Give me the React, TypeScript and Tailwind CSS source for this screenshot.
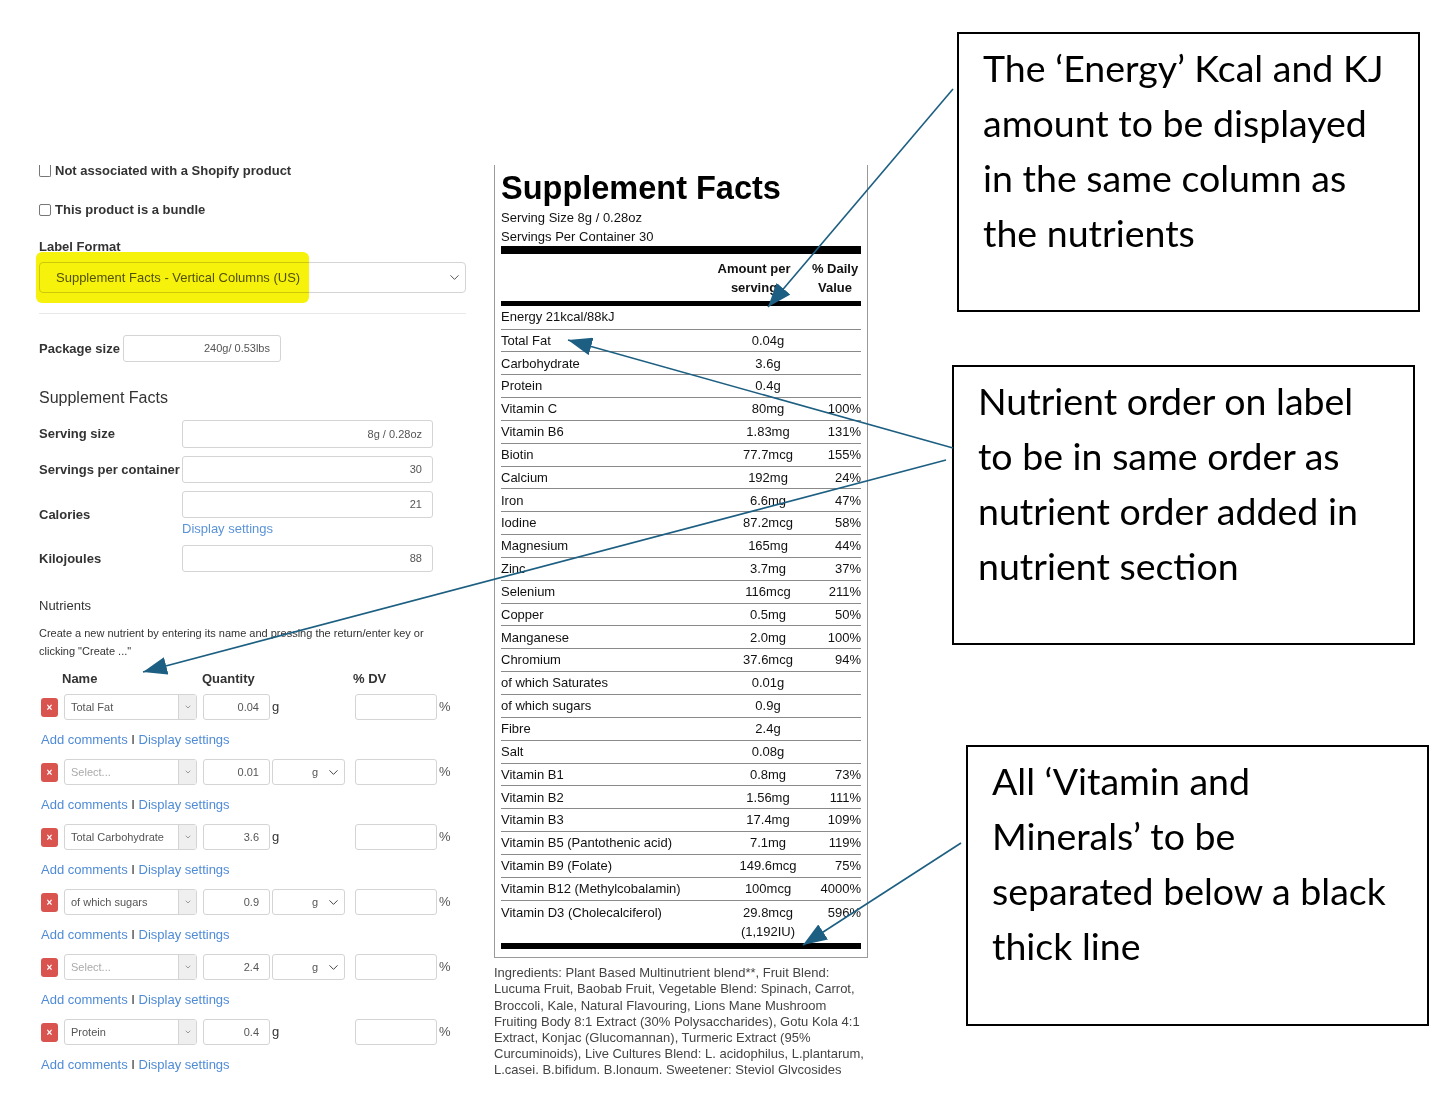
import React from 'react';
import { ChevronDown } from 'lucide-react';

type NutrientRow = { name: string | null; qty: string; unit: string | null };

const nutrientRows: NutrientRow[] = [
  { name: 'Total Fat', qty: '0.04', unit: null },
  { name: null, qty: '0.01', unit: 'g' },
  { name: 'Total Carbohydrate', qty: '3.6', unit: null },
  { name: 'of which sugars', qty: '0.9', unit: 'g' },
  { name: null, qty: '2.4', unit: 'g' },
  { name: 'Protein', qty: '0.4', unit: null },
];

const labelRows: [string, string, string][] = [
  ['Total Fat', '0.04g', ''],
  ['Carbohydrate', '3.6g', ''],
  ['Protein', '0.4g', ''],
  ['Vitamin C', '80mg', '100%'],
  ['Vitamin B6', '1.83mg', '131%'],
  ['Biotin', '77.7mcg', '155%'],
  ['Calcium', '192mg', '24%'],
  ['Iron', '6.6mg', '47%'],
  ['Iodine', '87.2mcg', '58%'],
  ['Magnesium', '165mg', '44%'],
  ['Zinc', '3.7mg', '37%'],
  ['Selenium', '116mcg', '211%'],
  ['Copper', '0.5mg', '50%'],
  ['Manganese', '2.0mg', '100%'],
  ['Chromium', '37.6mcg', '94%'],
  ['of which Saturates', '0.01g', ''],
  ['of which sugars', '0.9g', ''],
  ['Fibre', '2.4g', ''],
  ['Salt', '0.08g', ''],
  ['Vitamin B1', '0.8mg', '73%'],
  ['Vitamin B2', '1.56mg', '111%'],
  ['Vitamin B3', '17.4mg', '109%'],
  ['Vitamin B5 (Pantothenic acid)', '7.1mg', '119%'],
  ['Vitamin B9 (Folate)', '149.6mcg', '75%'],
  ['Vitamin B12 (Methylcobalamin)', '100mcg', '4000%'],
];

const ingredients = [
  'Ingredients: Plant Based Multinutrient blend**, Fruit Blend:',
  'Lucuma Fruit, Baobab Fruit, Vegetable Blend: Spinach, Carrot,',
  'Broccoli, Kale, Natural Flavouring, Lions Mane Mushroom',
  'Fruiting Body 8:1 Extract (30% Polysaccharides), Gotu Kola 4:1',
  'Extract, Konjac (Glucomannan), Turmeric Extract (95%',
  'Curcuminoids), Live Cultures Blend: L. acidophilus, L.plantarum,',
  'L.casei, B.bifidum, B.longum, Sweetener: Steviol Glycosides',
];

function Field({ value, className }: { value: string; className: string }) {
  return (
    <div className={`flex items-center justify-end rounded-[3px] border border-[#d4d4d4] pr-[10px] text-[11px] text-[#555] ${className}`}>
      {value}
    </div>
  );
}

function FormRow({ label, children, height }: { label: string; children: React.ReactNode; height: string }) {
  return (
    <div className={`flex items-center ${height}`}>
      <div className="w-[143px] font-bold">{label}</div>
      {children}
    </div>
  );
}

function Links() {
  return (
    <div className="mt-[12px] ml-[2px] h-[16px] leading-[16px] text-[13px]">
      <span className="text-[#4f8bd6]">Add comments</span>
      <span className="text-[#333]"> I </span>
      <span className="text-[#4f8bd6]">Display settings</span>
    </div>
  );
}

function NutrientEditor({ row, first }: { row: NutrientRow; first: boolean }) {
  return (
    <div className={first ? 'mt-[7px]' : 'mt-[11px]'}>
      <div className="flex h-[26px] items-center">
        <div className="ml-[2px] flex h-[19px] w-[17px] items-center justify-center rounded-[3px] bg-[#d9534f] text-[10px] font-bold text-white">
          ×
        </div>
        <div className="ml-[6px] flex h-[26px] w-[133px] rounded-[3px] border border-[#d4d4d4]">
          <div className={`flex flex-1 items-center pl-[6px] text-[11px] ${row.name ? 'text-[#555]' : 'text-[#aaa]'}`}>
            {row.name ?? 'Select...'}
          </div>
          <div className="flex w-[18px] items-center justify-center border-l border-[#d4d4d4] bg-[#efefef]">
            <ChevronDown size={8} strokeWidth={2.5} className="text-[#888]" />
          </div>
        </div>
        <Field value={row.qty} className="ml-[6px] h-[26px] w-[67px] text-[11px]" />
        <div className="flex w-[85px] items-center">
          {row.unit ? (
            <div className="ml-[2px] flex h-[26px] w-[73px] items-center justify-end gap-[8px] rounded-[3px] border border-[#d4d4d4] pr-[3px] text-[11px] text-[#555]">
              {row.unit}
              <ChevronDown size={15} strokeWidth={1.6} className="text-[#444]" />
            </div>
          ) : (
            <span className="ml-[2px] text-[13px] text-[#333]">g</span>
          )}
        </div>
        <div className="h-[26px] w-[82px] rounded-[3px] border border-[#d4d4d4]" />
        <span className="ml-[2px] text-[13px] text-[#555]">%</span>
      </div>
      <Links />
    </div>
  );
}

function FormColumn() {
  return (
    <div className="ml-[39px] w-[427px] shrink-0 pt-[163px] text-[13px] text-[#333]">
      <div className="flex h-[16px] items-center gap-[4px] font-bold">
        <span className="h-[12px] w-[12px] rounded-b-[2px] border border-t-0 border-[#777]" />
        Not associated with a Shopify product
      </div>
      <div className="mt-[23px] flex h-[16px] items-center gap-[4px] font-bold">
        <span className="h-[12px] w-[12px] rounded-[2px] border border-[#777]" />
        This product is a bundle
      </div>
      <div className="mt-[21px] h-[16px] font-bold leading-[16px]">Label Format</div>
      <div className="relative mt-[7px]">
        <div className="flex h-[31px] items-center justify-between rounded-[4px] border border-[#d4d4d4] pl-[16px] pr-[3px]">
          <span className="text-[13px] text-[#555]">Supplement Facts - Vertical Columns (US)</span>
          <ChevronDown size={15} strokeWidth={1.6} className="text-[#555]" />
        </div>
        <div className="absolute left-[-3px] top-[-10px] h-[51px] w-[273px] rounded-[6px] bg-[#f6f20c] mix-blend-multiply" />
      </div>
      <div className="mt-[20px] border-t border-[#e8e8e8]" />

      <div className="mt-[21px] flex h-[27px] items-center">
        <div className="w-[84px] font-bold">Package size</div>
        <Field value="240g/ 0.53lbs" className="h-[27px] w-[158px]" />
      </div>

      <div className="mt-[26px] h-[20px] text-[16px] leading-[20px] text-[#333]">Supplement Facts</div>

      <div className="mt-[12px]">
        <FormRow label="Serving size" height="h-[28px]">
          <Field value="8g / 0.28oz" className="h-[28px] w-[251px]" />
        </FormRow>
      </div>
      <div className="mt-[8px]">
        <FormRow label="Servings per container" height="h-[27px]">
          <Field value="30" className="h-[27px] w-[251px]" />
        </FormRow>
      </div>
      <div className="mt-[8px] flex items-center">
        <div className="w-[143px] font-bold">Calories</div>
        <div>
          <Field value="21" className="h-[27px] w-[251px]" />
          <div className="mt-[2px] h-[18px] leading-[18px] text-[#5b93d8]">Display settings</div>
        </div>
      </div>
      <div className="mt-[7px]">
        <FormRow label="Kilojoules" height="h-[27px]">
          <Field value="88" className="h-[27px] w-[251px]" />
        </FormRow>
      </div>

      <div className="mt-[26px] h-[16px] leading-[16px]">Nutrients</div>
      <div className="mt-[10px] text-[11px] leading-[18px]">
        Create a new nutrient by entering its name and pressing the return/enter key or
        <br />
        clicking "Create ..."
      </div>
      <div className="mt-[11px] flex h-[16px] font-bold leading-[16px]">
        <span className="ml-[23px] w-[140px]">Name</span>
        <span className="w-[151px]">Quantity</span>
        <span>% DV</span>
      </div>
      {nutrientRows.map((row, i) => (
        <NutrientEditor key={i} row={row} first={i === 0} />
      ))}
    </div>
  );
}

function LabelColumn() {
  return (
    <div className="ml-[28px] w-[374px] shrink-0 pt-[165px]">
      <div className="border-x border-b border-[#9a9a9a] px-[6px] pb-[8px] text-[13px] text-[#111]">
        <div className="pt-[7px] text-[32.5px] font-bold leading-none text-black">Supplement Facts</div>
        <div className="mt-[3px] leading-[19px]">
          <div>Serving Size 8g / 0.28oz</div>
          <div>Servings Per Container 30</div>
        </div>
        <div className="h-[8px] bg-black" />
        <div className="mt-[5px] flex font-bold leading-[19px]">
          <div className="w-[204px]" />
          <div className="w-[98px] text-center">
            Amount per
            <br />
            serving
          </div>
          <div className="ml-[6px] w-[52px] text-center">
            % Daily
            <br />
            Value
          </div>
        </div>
        <div className="mt-[4px] h-[5px] bg-black" />
        <div className="flex h-[23px] items-center">Energy 21kcal/88kJ</div>
        {labelRows.map(([name, amt, dv]) => (
          <div key={name} className="flex h-[22.85px] items-center border-t border-[#8a8a8a]">
            <div className="flex-1">{name}</div>
            <div className="w-[70px] text-center">{amt}</div>
            <div className="w-[58px] text-right">{dv}</div>
          </div>
        ))}
        <div className="flex border-t border-[#8a8a8a] pt-[2.5px] leading-[19px]">
          <div className="flex-1">Vitamin D3 (Cholecalciferol)</div>
          <div className="w-[70px] text-center">
            29.8mcg
            <br />
            (1,192IU)
          </div>
          <div className="w-[58px] text-right">596%</div>
        </div>
        <div className="mt-[1.5px] h-[6.5px] bg-black" />
      </div>
      <div className="mt-[7px] h-[109px] overflow-hidden whitespace-nowrap text-[13px] leading-[16.2px] text-[#444]">
        {ingredients.map((line) => (
          <div key={line}>{line}</div>
        ))}
      </div>
    </div>
  );
}

function Note({ lines, className }: { lines: string[]; className: string }) {
  return (
    <div className={`h-[280px] w-[463px] whitespace-nowrap border-2 border-black pl-[24px] pt-[6px] ${className}`}>
      {lines.map((l) => (
        <div key={l}>{l}</div>
      ))}
    </div>
  );
}

function NotesColumn() {
  return (
    <div className="ml-[84px] shrink-0 font-['Lato',sans-serif] text-[37.5px] leading-[55px] text-black">
      <Note
        className="ml-[5px] mt-[32px]"
        lines={['The \u2018Energy\u2019 Kcal and KJ', 'amount to be displayed', 'in the same column as', 'the nutrients']}
      />
      <Note
        className="mt-[53px]"
        lines={['Nutrient order on label', 'to be in same order as', 'nutrient order added in', 'nutrient section']}
      />
      <Note
        className="ml-[14px] mt-[100px] h-[281px]"
        lines={['All \u2018Vitamin and', 'Minerals\u2019 to be', 'separated below a black', 'thick line']}
      />
    </div>
  );
}

function Arrows() {
  const c = '#1d5f82';
  return (
    <svg className="pointer-events-none absolute left-0 top-0" width="1445" height="1106">
      <defs>
        <marker id="ah" markerUnits="userSpaceOnUse" markerWidth="24" markerHeight="18" refX="24" refY="9" orient="auto">
          <path d="M0,0 L24,9 L0,18 Z" fill={c} />
        </marker>
      </defs>
      <line x1="953" y1="89" x2="768" y2="307" stroke={c} strokeWidth="1.6" markerEnd="url(#ah)" />
      <line x1="953" y1="448" x2="568" y2="340" stroke={c} strokeWidth="1.6" markerEnd="url(#ah)" />
      <line x1="946" y1="460" x2="143" y2="672" stroke={c} strokeWidth="1.6" markerEnd="url(#ah)" />
      <line x1="961" y1="843" x2="803" y2="945" stroke={c} strokeWidth="1.6" markerEnd="url(#ah)" />
    </svg>
  );
}

export default function App() {
  return (
    <div className="relative h-[1106px] w-[1445px] overflow-hidden bg-white font-['Liberation_Sans',Arial,sans-serif]">
      <div className="flex items-start">
        <FormColumn />
        <LabelColumn />
        <NotesColumn />
      </div>
      <Arrows />
    </div>
  );
}
